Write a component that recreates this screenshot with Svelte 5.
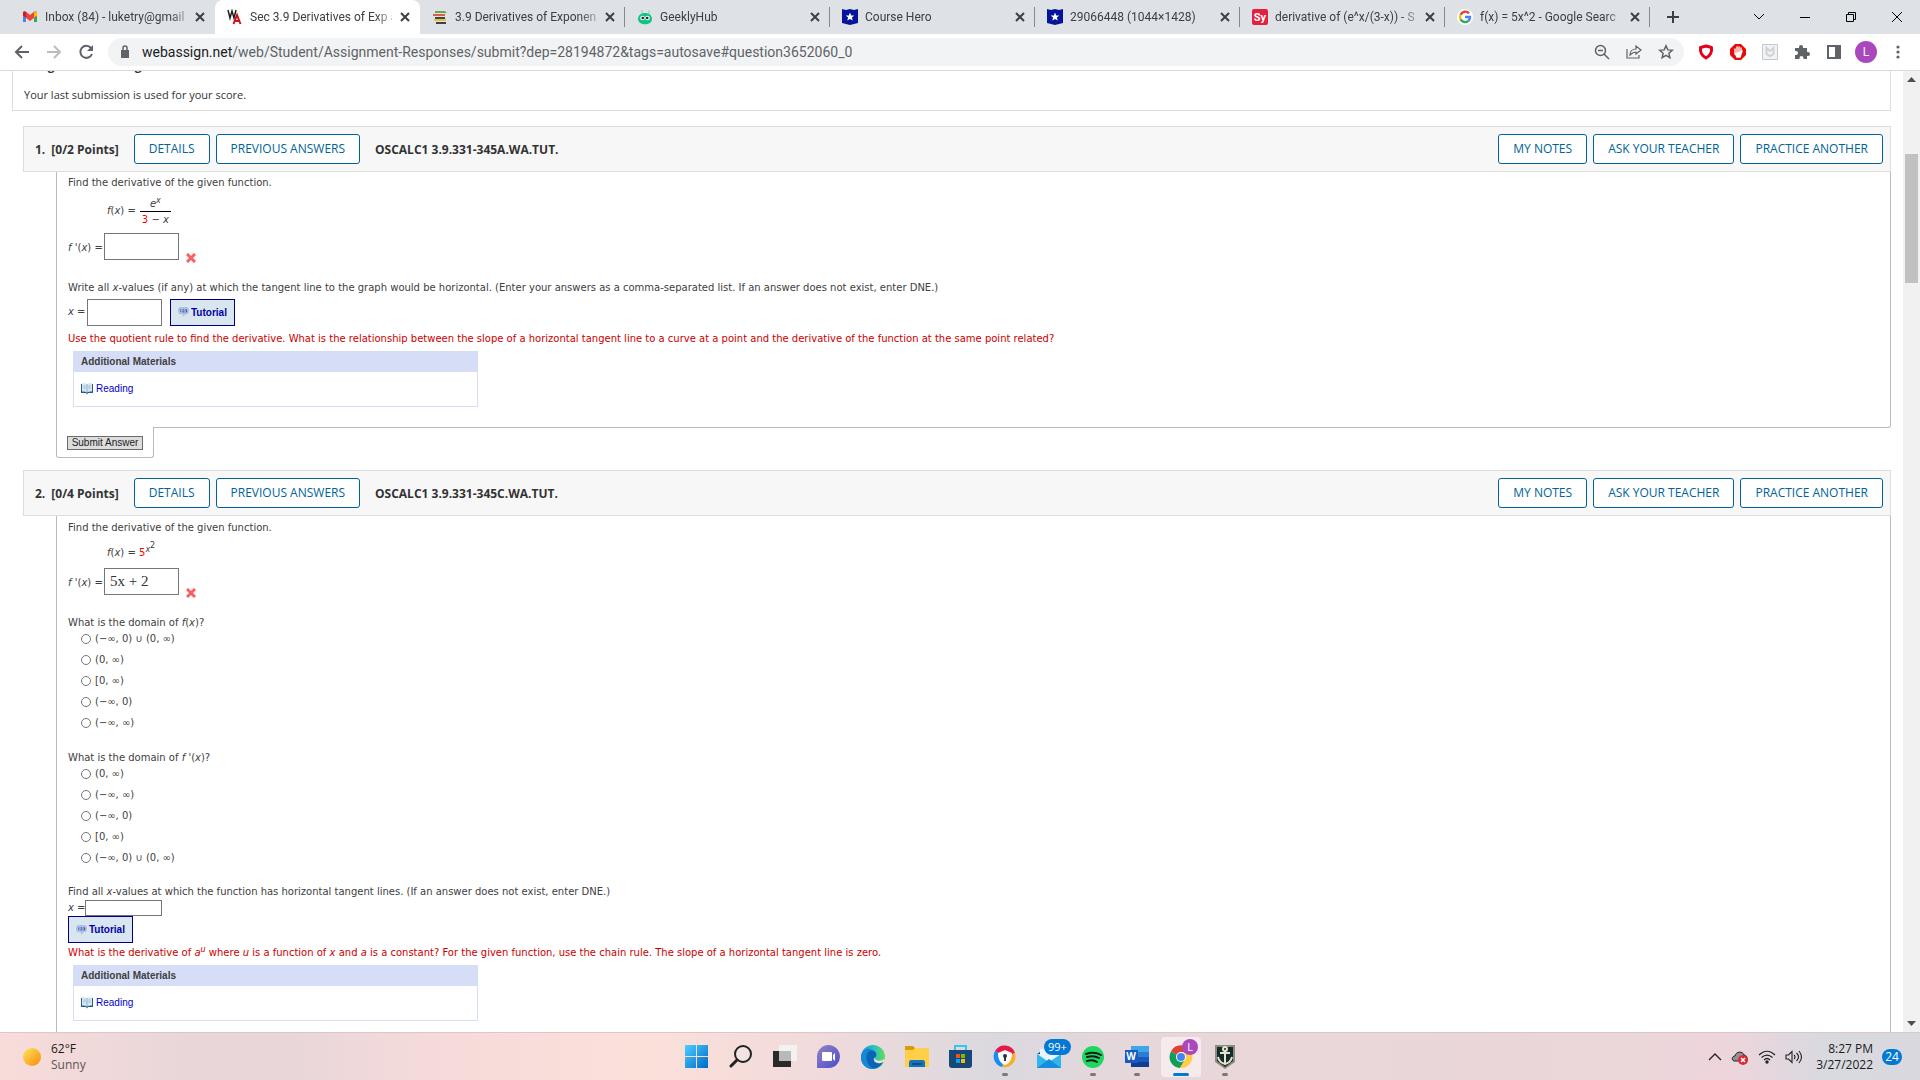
<script>
    let tabs = [
        { icon: "gmail", title: "Inbox (84) - luketry@gmail" },
        { icon: "webassign", title: "Sec 3.9 Derivatives of Exp a", active: true },
        { icon: "books", title: "3.9 Derivatives of Exponen", line: true },
        { icon: "robot", title: "GeeklyHub", line: true },
        { icon: "hero", title: "Course Hero", line: true },
        { icon: "hero", title: "29066448 (1044×1428)", line: true },
        { icon: "symbolab", title: "derivative of (e^x/(3-x)) - S", line: true },
        { icon: "google", title: "f(x) = 5x^2 - Google Searc", line: true },
    ];

    const domainF = ["(−∞, 0) ∪ (0, ∞)", "(0, ∞)", "[0, ∞)", "(−∞, 0)", "(−∞, ∞)"];
    const domainFPrime = ["(0, ∞)", "(−∞, ∞)", "(−∞, 0)", "[0, ∞)", "(−∞, 0) ∪ (0, ∞)"];

    const apps = [
        { name: "Start" },
        { name: "Search" },
        { name: "Task view" },
        { name: "Chat" },
        { name: "Edge" },
        { name: "File Explorer" },
        { name: "Store" },
        { name: "Secure Browser", open: true },
        { name: "Mail", badge: "99+" },
        { name: "Spotify", open: true },
        { name: "Word", open: true },
        { name: "Chrome", open: true, focused: true, badge: "L" },
        { name: "Warships", open: true },
    ];

    let first = "";
    let firstX = "";
    let second = "5x + 2";
    let secondX = "";
    let pickF;
    let pickFPrime;
</script>

{#snippet favicon(name)}
    <svg class="favicon" viewBox="0 0 16 16" aria-hidden="true">
        {#if name === "gmail"}
            <path d="M1 3.5V13h3V6.500z" fill="#4285f4" />
            <path d="M12 6.500V13h3V3.500z" fill="#34a853" />
            <path d="M1 4v2.500L8 12l7-5.500V4c0-1.800-1.800-2.200-3-1.200L8 6 4 2.800C2.800 1.800 1 2.200 1 4z" fill="#ea4335" />
            <path d="M1 4v2.500l3 2.300V2.900C2.800 2 1 2.300 1 4z" fill="#c5221f" />
            <path d="M12 2.900v5.900l3-2.300V4c0-1.700-1.800-2-3-1.100z" fill="#fbbc04" />
        {:else if name === "webassign"}
            <path d="M1 1l2 8 2-7 2 7 2-8" fill="none" stroke="#222" stroke-width="1.500" />
            <path d="M6.500 15L10 6l3.500 9M8 12h5" fill="none" stroke="#d0111b" stroke-width="2" />
        {:else if name === "books"}
            <path d="M3 2h10l2 2H3z" fill="#69a84f" />
            <path d="M1 5h12v2H1z" fill="#d4624d" />
            <path d="M3 8h10v2H3z" fill="#444" />
            <path d="M2 10h12v2H2z" fill="#e6c637" />
            <path d="M4 13h10v2H4z" fill="#3c4248" />
        {:else if name === "robot"}
            <path d="M5 1v4M12 1v4" stroke="#7bd6b4" />
            <path d="M1 10c0-8 14-8 14 0 0 7-14 7-14 0z" fill="#12c483" />
            <circle cx="5.500" cy="9" r="2.300" fill="#fff" />
            <circle cx="10.500" cy="9" r="2.300" fill="#fff" />
            <circle cx="5.800" cy="9" r="1.300" fill="#222" />
            <circle cx="10.200" cy="9" r="1.300" fill="#222" />
        {:else if name === "hero"}
            <path d="M0 0l4 1 4-1 4 1 4-1v14l-8 2-8-2z" fill="#05149a" />
            <path d="M8 3.500l1.200 2.900 3.100.2-2.400 2 .8 3L8 10l-2.700 1.600.8-3-2.400-2 3.100-.2z" fill="#fff" />
        {:else if name === "symbolab"}
            <rect width="16" height="16" rx="2" fill="#e4203f" />
            <text x="8" y="12" text-anchor="middle" font-size="11" font-weight="700" fill="#fff">Sy</text>
        {:else}
            <circle cx="8" cy="8" r="8" fill="#fff" />
            <g fill="none" stroke-width="2.400">
                <path d="M12 4.400A5 5 0 0 0 3.600 5.800" stroke="#ea4335" />
                <path d="M3.600 5.800a5 5 0 0 0 0 4.600" stroke="#fbbc04" />
                <path d="M3.600 10.400a5 5 0 0 0 7.800 1.400" stroke="#34a853" />
                <path d="M11.400 11.800A5 5 0 0 0 13 8H8" stroke="#4285f4" />
            </g>
        {/if}
    </svg>
{/snippet}

{#snippet wrong()}
    <svg class="wrong" viewBox="0 0 10 10" role="img" aria-label="Incorrect">
        <path d="M1 1l8 8M9 1L1 9" stroke="#f9605f" stroke-width="3" />
    </svg>
{/snippet}

{#snippet tutorial()}
    <button class="tutorial">
        <svg width="11" height="10" viewBox="0 0 12 11" aria-hidden="true">
            <path d="M3 0h6c2 0 3 1.500 3 4S11 8 9 8H8l-2 3-1-3H3C1 8 0 6.500 0 4s1-4 3-4z" fill="#a9c1e6" />
            <path d="M3 2.500v3M5 3h1.500v1L5 5.500h2M8 3h1.500v2.500H8M8.500 4.200h1" fill="none" stroke="#33419c" stroke-width=".8" />
        </svg>
        Tutorial
    </button>
{/snippet}

{#snippet materials()}
    <section class="materials">
        <h3>Additional Materials</h3>
        <a href="#reading">
            <svg width="12" height="12" viewBox="0 0 12 12" aria-hidden="true">
                <path d="M0 1h12v9H7l-1 1.500L5 10H0z" fill="#255c8c" />
                <path d="M1 0c2 0 4 0 5 1 1-1 3-1 5-1v8.500c-2 0-4 0-5 1-1-1-3-1-5-1z" fill="#d9e8f1" />
                <path d="M6 1v8.500M2.500 3h2M7.500 3h2M2.500 5h2M7.500 5h2" stroke="#7ca4bf" stroke-width=".8" />
            </svg>
            Reading
        </a>
    </section>
{/snippet}

{#snippet heading(number, points, code)}
    <header class="question-head">
        <strong class="number">{number}.</strong>
        <strong class="points">[{points} Points]</strong>
        <button>DETAILS</button>
        <button>PREVIOUS ANSWERS</button>
        <h2>{code}</h2>
        <button>MY NOTES</button>
        <button>ASK YOUR TEACHER</button>
        <button>PRACTICE ANOTHER</button>
    </header>
{/snippet}

{#snippet appIcon(name)}
    <svg width="24" height="24" viewBox="0 0 24 24" aria-hidden="true">
        {#if name === "Start"}
            <path d="M0 0h11v11H0zM12 0h11v11H12zM0 12h11v11H0zM12 12h11v11H12z" fill="url(#blue)" />
        {:else if name === "Search"}
            <circle cx="14" cy="9" r="8" fill="#f3e4e4" stroke="#222" stroke-width="2" />
            <path d="M8 15l-6 6" stroke="#222" stroke-width="3" stroke-linecap="round" />
        {:else if name === "Task view"}
            <path d="M0 6h18v16H0z" fill="#292a29" />
            <path d="M6 0h18v16H6z" fill="#f2f2f2" />
            <path d="M6 6h12v10H6z" fill="#b9b9b9" />
        {:else if name === "Chat"}
            <path d="M0 23V11a11.500 11.500 0 1 1 12 12z" fill="url(#purple)" />
            <rect x="5" y="7" width="10" height="9" rx="1" fill="#fff" />
            <path d="M16 10l2-2v8l-2-2z" fill="#fff" />
        {:else if name === "Edge"}
            <circle cx="12" cy="12" r="12" fill="url(#edge)" />
            <path d="M0 12C1 5 7 3 11 5c6 2 5 7 2 8-1 4 4 7 9 4-3 6-9 8-14 6-5-2-8-6-8-11z" fill="#0b63b8" />
            <path d="M0 12C1 5 8 3 12 6 7 5 4 10 6 16c1 4 4 7 8 8C6 25 0 20 0 12z" fill="#1589d7" />
            <path d="M13 13c-1 4 4 7 9 4l1 0c1-1 1-3 0-3-2 2-7 3-10-1z" fill="#eedcde" />
        {:else if name === "File Explorer"}
            <path d="M0 1h8l2 2v4H0z" fill="#dc9a0a" />
            <path d="M0 5h8l2-2h14v19H0z" fill="#ffd047" />
            <path d="M4 22v-5c0-1 1-2 2-2h12c1 0 2 1 2 2v5z" fill="#1473bf" />
            <path d="M7 18h10v2H7z" fill="#084e91" />
        {:else if name === "Store"}
            <path d="M6 6V1h11v5" fill="none" stroke="#35c5ef" stroke-width="2" />
            <path d="M0 5h23v15c0 2-1 3-3 3H3c-2 0-3-1-3-3z" fill="#174777" />
            <path d="M7 9h4v4H7z" fill="#f15022" />
            <path d="M12 9h4v4h-4z" fill="#80ba02" />
            <path d="M7 14h4v4H7z" fill="#02a4ee" />
            <path d="M12 14h4v4h-4z" fill="#ffb902" />
        {:else if name === "Secure Browser"}
            <path d="M2 6A11 11 0 0 1 22 8L12 12z" fill="#e71849" />
            <path d="M22 8A11 11 0 0 1 9 22l3-10z" fill="#fbab28" />
            <path d="M9 22A11 11 0 0 1 2 6l10 6z" fill="#168df2" />
            <path d="M12 5l7 3c0 6-2 10-7 12-5-2-7-6-7-12z" fill="#fff" />
            <circle cx="12" cy="11" r="2" fill="#333" />
            <path d="M11 11h2v5h-2z" fill="#333" />
        {:else if name === "Mail"}
            <path d="M0 9l12-8 12 8z" fill="#0a4c94" />
            <path d="M3 4h19v12H3z" fill="#e9f5fc" />
            <path d="M0 9l12 8 12-8v14H0z" fill="#34b4ee" />
            <path d="M0 23l12-9 12 9z" fill="#158edb" />
        {:else if name === "Spotify"}
            <circle cx="12" cy="12" r="11" fill="#1ed760" />
            <path d="M5 9q8-3 15 1M6 12q7-2 12 1M6 16q6-2 10 1" fill="none" stroke="#151b18" stroke-width="2" stroke-linecap="round" />
        {:else if name === "Word"}
            <path d="M6 1h18v6H6z" fill="#41a5ee" />
            <path d="M6 7h18v5H6z" fill="#2b7cd3" />
            <path d="M6 12h18v5H6z" fill="#185abd" />
            <path d="M6 17h18v5H6z" fill="#103f91" />
            <path d="M0 5h13v13H0z" fill="#185abd" />
            <text x="6" y="15" text-anchor="middle" font-size="10" font-weight="700" fill="#fff">W</text>
        {:else if name === "Chrome"}
            <path d="M12 12L2 6.500A11 11 0 0 1 22 7H12z" fill="#dc4437" />
            <path d="M12 12L2 6.500A11 11 0 0 0 11 23l5-8z" fill="#139d59" />
            <path d="M12 7h10a11 11 0 0 1-11 16l5-9z" fill="#ffce44" />
            <circle cx="12" cy="12" r="5" fill="#fff" />
            <circle cx="12" cy="12" r="4" fill="#4385f4" />
        {:else}
            <path d="M2 0h20v17l-10 7-10-7z" fill="#8e8d7b" />
            <path d="M4 2h16v14l-8 6-8-6z" fill="#122d2b" />
            <circle cx="12" cy="4" r="2" fill="none" stroke="#e8e3cf" stroke-width="2" />
            <path d="M12 6v14M7 8h10M5 12c1 5 4 6 7 7 3-1 6-2 7-7" fill="none" stroke="#e8e3cf" stroke-width="2" />
        {/if}
    </svg>
{/snippet}

<div class="desktop">
    <nav class="tabs" aria-label="Tabs">
        {#each tabs as tab}
            <div class="tab" class:active={tab.active} class:line={tab.line}>
                {@render favicon(tab.icon)}
                <span>{tab.title}</span>
                <button aria-label="Close tab">
                    <svg width="12" height="12" viewBox="0 0 12 12"><path d="M2 2l8 8M10 2l-8 8" stroke="#3c4043" stroke-width="2" /></svg>
                </button>
            </div>
        {/each}
        <button class="new-tab" aria-label="New tab">
            <svg width="14" height="14" viewBox="0 0 14 14"><path d="M7 1v12M1 7h12" stroke="#3c4043" stroke-width="2" /></svg>
        </button>
        <div class="window-buttons">
            <button aria-label="Search tabs">
                <svg width="12" height="12" viewBox="0 0 12 12"><path d="M1 3l5 5 5-5" /></svg>
            </button>
            <button aria-label="Minimize">
                <svg width="12" height="12" viewBox="0 0 12 12"><path d="M1 6.500h10" /></svg>
            </button>
            <button aria-label="Restore">
                <svg width="12" height="12" viewBox="0 0 12 12"><path d="M1.500 3.500h7v7h-7zM3.500 3.500v-2h7v7h-2" /></svg>
            </button>
            <button aria-label="Close">
                <svg width="12" height="12" viewBox="0 0 12 12"><path d="M1 1l10 10M11 1L1 11" /></svg>
            </button>
        </div>
    </nav>

    <div class="toolbar">
        <button aria-label="Back">
            <svg width="16" height="16" viewBox="0 0 16 16"><path d="M15 8H2M8 2L2 8l6 6" fill="none" stroke="#5f6368" stroke-width="2" /></svg>
        </button>
        <button aria-label="Forward">
            <svg width="16" height="16" viewBox="0 0 16 16"><path d="M1 8h13M8 2l6 6-6 6" fill="none" stroke="#bbbdbf" stroke-width="2" /></svg>
        </button>
        <button aria-label="Reload">
            <svg width="16" height="16" viewBox="0 0 16 16">
                <path d="M13 4a6 6 0 1 0 1 6" fill="none" stroke="#5f6368" stroke-width="2" />
                <path d="M15 1v6H9z" fill="#5f6368" />
            </svg>
        </button>
        <div class="address">
            <svg width="10" height="14" viewBox="0 0 10 14" aria-hidden="true">
                <path d="M1 5h8v8H1z" fill="#5f6368" />
                <path d="M3 6V3a2 2 0 0 1 4 0v3" fill="none" stroke="#5f6368" stroke-width="1.500" />
            </svg>
            <a href="#question3652060_0"><b>webassign.net</b>/web/Student/Assignment-Responses/submit?dep=28194872&amp;tags=autosave#question3652060_0</a>
            <button aria-label="Zoom">
                <svg width="16" height="16" viewBox="0 0 16 16"><g fill="none" stroke="#5f6368" stroke-width="1.500"><circle cx="6.500" cy="6.500" r="5" /><path d="M10 10l5 5M4 6.500h5" /></g></svg>
            </button>
            <button aria-label="Share">
                <svg width="16" height="16" viewBox="0 0 16 16"><path d="M1 5v9h12v-3M4 11c0-4 3-6 6-6V2l5 4-5 4V8c-2 0-4 1-6 3z" fill="none" stroke="#5f6368" stroke-width="1.200" /></svg>
            </button>
            <button aria-label="Bookmark">
                <svg width="16" height="16" viewBox="0 0 16 16"><path d="M8 1.800l1.800 4.100 4.500.4-3.400 3 1 4.400L8 11.400l-3.900 2.300 1-4.400-3.400-3 4.500-.4z" fill="none" stroke="#5f6368" stroke-width="1.500" /></svg>
            </button>
        </div>
        <button aria-label="Shield">
            <svg width="16" height="16" viewBox="0 0 16 16"><path d="M8 2l5.500 1.500C14 8 12 12 8 14 4 12 2 8 2.500 3.500z" fill="#fff" stroke="#e5001b" stroke-width="3" stroke-linejoin="round" /></svg>
        </button>
        <button aria-label="Ad blocker">
            <svg width="16" height="16" viewBox="0 0 16 16">
                <path d="M5 0h6l5 5v6l-5 5H5l-5-5V5z" fill="#e40b0b" />
                <path d="M5 5v5M7 3v6M9 3v6M11 4v6M5 9l2 4h3l2-6" fill="#fff" stroke="#fff" stroke-width="1.400" stroke-linecap="round" />
            </svg>
        </button>
        <button aria-label="Web advisor">
            <svg width="16" height="16" viewBox="0 0 16 16"><path d="M.5.500h15v15H.5z" fill="#f1f3f4" stroke="#c4c9cd" /><path d="M4.500 4v6L8 12l3.500-2V4L8 7z" fill="none" stroke="#cfd3d5" stroke-width="2" /></svg>
        </button>
        <button aria-label="Extensions">
            <svg width="16" height="16" viewBox="0 0 16 16"><path d="M1 4h4V3a2 2 0 0 1 4 0v1h4v4h1a2 2 0 0 1 0 4h-1v3H9.500v-1a2 2 0 0 0-4 0v1H1v-4h1a2 2 0 0 0 0-4H1z" fill="#5f6368" /></svg>
        </button>
        <button aria-label="Side panel">
            <svg width="16" height="16" viewBox="0 0 16 16"><path d="M1 1h14v14H1zm2 2v10h6V3z" fill="#5f6368" fill-rule="evenodd" /></svg>
        </button>
        <button class="avatar" aria-label="Profile">L</button>
        <button aria-label="Menu">
            <svg width="16" height="16" viewBox="0 0 16 16" fill="#5f6368"><circle cx="8" cy="3" r="1.600" /><circle cx="8" cy="8" r="1.600" /><circle cx="8" cy="13" r="1.600" /></svg>
        </button>
    </div>

    <div class="viewport">
        <main>
            <section class="notice">
                <strong>Assignment Scoring</strong>
                <p>Your last submission is used for your score.</p>
            </section>

            <article>
                {@render heading(1, "0/2", "OSCALC1 3.9.331-345A.WA.TUT.")}
                <div class="question">
                    <p>Find the derivative of the given function.</p>
                    <div class="formula">
                        <span><i>f</i>(<i>x</i>) =</span>
                        <span class="fraction">
                            <span><i>e<sup>x</sup></i></span>
                            <span><span class="value">3</span> − <i>x</i></span>
                        </span>
                    </div>
                    <div class="answer">
                        <label for="a1"><i>f</i> '(<i>x</i>) =</label>
                        <input id="a1" type="text" bind:value={first} />
                        {@render wrong()}
                    </div>
                    <p class="next">Write all <i>x</i>-values (if any) at which the tangent line to the graph would be horizontal. (Enter your answers as a comma-separated list. If an answer does not exist, enter DNE.)</p>
                    <div class="short">
                        <label for="a2"><i>x</i> =</label>
                        <input id="a2" type="text" bind:value={firstX} />
                        {@render tutorial()}
                    </div>
                    <p class="hint">Use the quotient rule to find the derivative. What is the relationship between the slope of a horizontal tangent line to a curve at a point and the derivative of the function at the same point related?</p>
                    {@render materials()}
                </div>
                <div class="submit"><button>Submit Answer</button></div>
            </article>

            <article>
                {@render heading(2, "0/4", "OSCALC1 3.9.331-345C.WA.TUT.")}
                <div class="question last">
                    <p>Find the derivative of the given function.</p>
                    <div class="formula power">
                        <span><i>f</i>(<i>x</i>) = <span class="value">5</span><sup><i>x</i><sup>2</sup></sup></span>
                    </div>
                    <div class="answer">
                        <label for="b1"><i>f</i> '(<i>x</i>) =</label>
                        <input id="b1" type="text" bind:value={second} />
                        {@render wrong()}
                    </div>
                    <fieldset>
                        <legend>What is the domain of <i>f</i>(<i>x</i>)?</legend>
                        {#each domainF as option}
                            <label><input type="radio" name="domain-f" value={option} bind:group={pickF} />{option}</label>
                        {/each}
                    </fieldset>
                    <fieldset>
                        <legend>What is the domain of <i>f</i> '(<i>x</i>)?</legend>
                        {#each domainFPrime as option}
                            <label><input type="radio" name="domain-fp" value={option} bind:group={pickFPrime} />{option}</label>
                        {/each}
                    </fieldset>
                    <p class="next">Find all <i>x</i>-values at which the function has horizontal tangent lines. (If an answer does not exist, enter DNE.)</p>
                    <div class="plain">
                        <label for="b2"><i>x</i> =</label>
                        <input id="b2" type="text" bind:value={secondX} />
                    </div>
                    {@render tutorial()}
                    <p class="hint close">What is the derivative of <i>a<sup>u</sup></i> where <i>u</i> is a function of <i>x</i> and <i>a</i> is a constant? For the given function, use the chain rule. The slope of a horizontal tangent line is zero.</p>
                    {@render materials()}
                </div>
            </article>
        </main>
        <div class="scrollbar" aria-hidden="true">
            <svg width="17" height="17" viewBox="0 0 17 17"><path d="M4 11l4.500-5 4.500 5z" fill="#505050" /></svg>
            <div class="track"><div class="thumb"></div></div>
            <svg width="17" height="17" viewBox="0 0 17 17"><path d="M4 6l4.500 5L13 6z" fill="#505050" /></svg>
        </div>
    </div>

    <footer class="taskbar">
        <div class="weather">
            <svg width="20" height="20" viewBox="0 0 20 20" aria-hidden="true"><circle cx="10" cy="10" r="9" fill="url(#sun)" /></svg>
            <p>62°F<br /><span>Sunny</span></p>
        </div>
        <div class="apps">
            {#each apps as app}
                <button class:open={app.open} class:focused={app.focused} aria-label={app.name}>
                    {@render appIcon(app.name)}
                    {#if app.badge}
                        <span class="badge" class:profile={app.focused}>{app.badge}</span>
                    {/if}
                </button>
            {/each}
        </div>
        <div class="tray">
            <svg width="14" height="14" viewBox="0 0 14 14"><path d="M1 10l6-6 6 6" fill="none" stroke="#222" stroke-width="1.300" /></svg>
            <svg width="18" height="16" viewBox="0 0 18 16">
                <path d="M3 12c-3-1-2-5 1-5 1-5 8-5 9-1 3 0 4 4 2 6z" fill="#929292" stroke="#222" />
                <circle cx="12" cy="11" r="5" fill="#d92a35" />
                <path d="M10 9l4 4M14 9l-4 4" stroke="#fff" stroke-width="1.500" />
            </svg>
            <svg width="18" height="14" viewBox="0 0 18 14">
                <path d="M1 5c5-5 11-5 16 0M3.500 7.500c4-3.500 7-3.500 11 0M6 10c2-2 4-2 6 0" fill="none" stroke="#222" stroke-width="1.200" />
                <circle cx="9" cy="12" r="1.700" fill="#222" />
            </svg>
            <svg width="18" height="14" viewBox="0 0 18 14"><path d="M1 5h2.500L7 1.500v11L3.500 9H1zM9 5q2 2 0 4M11.500 3q4 4 0 8M14 1q5 6 0 12" fill="none" stroke="#222" stroke-width="1.100" /></svg>
            <time>8:27 PM<br />3/27/2022</time>
            <span class="count">24</span>
        </div>
    </footer>
</div>

<svg class="defs" width="0" height="0" aria-hidden="true">
    <defs>
        <linearGradient id="blue" x1="0" y1="0" x2="1" y2="1"><stop stop-color="#4bcfff" /><stop offset="1" stop-color="#0067c9" /></linearGradient>
        <linearGradient id="purple" x1="0" y1="0" x2="1" y2="1"><stop stop-color="#9584c4" /><stop offset="1" stop-color="#4c4bc9" /></linearGradient>
        <linearGradient id="edge"><stop stop-color="#1597dc" /><stop offset=".5" stop-color="#24bccb" /><stop offset="1" stop-color="#63df54" /></linearGradient>
        <linearGradient id="sun" x1="0" y1="0" x2="1" y2="1"><stop stop-color="#ffe45c" /><stop offset="1" stop-color="#f98a08" /></linearGradient>
    </defs>
</svg>

<style>
    :global(body) {
        overflow: hidden;
    }

    .desktop {
        height: 100vh;
        display: flex;
        flex-direction: column;
        font-family: "Open Sans", sans-serif;
        font-size: 12px;
        color: #3c4043;
        background: white;
    }

    * {
        box-sizing: border-box;
    }

    button {
        font: inherit;
        color: inherit;
        background: none;
        border: none;
        padding: 0;
    }

    svg {
        display: block;
        flex-shrink: 0;
    }

    p {
        margin: 0;
    }

    .defs {
        position: absolute;
    }

    /* browser */
    .tabs {
        display: flex;
        align-items: center;
        height: 34px;
        padding-left: 10px;
        background: #dee1e6;
        font-family: Roboto, sans-serif;
    }

    .tab {
        display: flex;
        align-items: center;
        gap: 7px;
        flex: 0 1 205px;
        min-width: 0;
        height: 34px;
        padding: 0 9px 0 12px;
        position: relative;
    }
    .tab.active {
        background: white;
        border-radius: 8px 8px 0 0;
    }
    .tab.line::after {
        content: "";
        position: absolute;
        right: 0;
        top: 7px;
        height: 20px;
        width: 1px;
        background: #85888d;
    }
    .tab span {
        flex: 1;
        min-width: 0;
        overflow: hidden;
        white-space: nowrap;
        mask-image: linear-gradient(to right, black 88%, transparent 105%);
    }

    .favicon {
        width: 16px;
        height: 16px;
    }

    .new-tab {
        margin-left: 16px;
    }

    .window-buttons {
        display: flex;
        margin-left: auto;
        height: 28px;
    }
    .window-buttons button {
        width: 46px;
        display: grid;
        place-items: center;
    }
    .window-buttons path {
        fill: none;
        stroke: black;
    }

    .toolbar {
        display: flex;
        align-items: center;
        height: 37px;
        padding: 0 6px;
        border-bottom: 1px solid #d9dadc;
        font-family: Roboto, sans-serif;
    }
    .toolbar button {
        width: 32px;
        display: grid;
        place-items: center;
    }

    .address {
        flex: 1;
        display: flex;
        align-items: center;
        height: 28px;
        margin: 0 6px;
        padding: 0 2px 0 12px;
        border-radius: 14px;
        background: #f1f3f4;
        font-size: 14px;
    }
    .address a {
        flex: 1;
        margin-left: 12px;
        color: #5f6368;
        text-decoration: none;
    }
    .address b {
        font-weight: 400;
        color: #202124;
    }

    .toolbar .avatar {
        width: 22px;
        height: 22px;
        margin: 0 5px;
        border-radius: 50%;
        background: #ab47bc;
        color: white;
    }

    /* page */
    .viewport {
        flex: 1;
        min-height: 0;
        display: flex;
    }

    main {
        flex: 1;
        min-width: 0;
        overflow: hidden;
        padding: 0 12px;
        color: #404040;
    }

    .notice {
        display: flex;
        flex-direction: column;
        justify-content: flex-end;
        height: 40px;
        overflow: hidden;
        padding: 0 11px 7px;
        border: 1px solid #ddd;
        border-top: none;
        line-height: 17px;
        color: #333;
    }
    .notice p {
        margin-top: 12px;
        font-size: 11px;
    }

    article {
        margin: 15px 0 0 11px;
    }
    article + article {
        margin-top: 12px;
    }

    .question-head {
        display: flex;
        align-items: center;
        height: 46px;
        padding: 0 7px 0 11px;
        gap: 6px;
        background: #f7f7f7;
        border: 1px solid #ddd;
        color: #333;
    }
    .question-head .points {
        margin-right: 9px;
    }
    .question-head h2 {
        flex: 1;
        margin: 0 0 0 9px;
        font-size: 12px;
    }
    .question-head button {
        height: 30px;
        padding: 0 14px 1px;
        border: 1px solid #006298;
        border-radius: 3px;
        background: white;
        color: #006298;
    }

    .question {
        margin-left: 33px;
        padding: 4px 11px 20px;
        border: 1px solid #bbb;
        border-top: none;
        border-bottom-right-radius: 3px;
        font: 10px/14px "DejaVu Sans", sans-serif;
    }
    .question.last {
        min-height: 600px;
        padding-top: 5px;
    }

    .formula {
        display: flex;
        align-items: center;
        gap: 4px;
        height: 32px;
        margin: 5px 0 6px 39px;
    }
    .formula.power {
        height: 26px;
        margin-bottom: 2px;
    }

    sup {
        font-size: 8px;
        line-height: 0;
    }

    .fraction {
        display: flex;
        flex-direction: column;
        align-items: center;
    }
    .fraction > span {
        padding: 0 2px;
        line-height: 15px;
    }
    .fraction > span:last-child {
        border-top: 1px solid black;
    }

    .value {
        color: red;
    }

    .answer {
        display: flex;
        align-items: center;
        height: 30px;
    }
    .answer label {
        width: 36px;
    }
    .answer .wrong {
        width: 10px;
        height: 10px;
        margin-left: 7px;
        align-self: flex-end;
    }
    .answer input,
    .short input {
        width: 75px;
        height: 27px;
        padding: 0 5px;
        border: 1px solid #767676;
        font: 15px "Liberation Serif", serif;
        color: #333;
    }
    .answer input {
        align-self: flex-start;
    }

    .next {
        margin-top: 18px;
    }

    .short {
        display: flex;
        align-items: center;
        height: 28px;
        margin-top: 3px;
    }
    .short label {
        width: 19px;
    }
    .short input {
        margin-right: 8px;
    }

    .plain {
        display: flex;
        align-items: center;
        margin-top: 1px;
    }
    .plain label {
        width: 17px;
        white-space: nowrap;
    }
    .plain input {
        width: 77px;
        height: 16px;
        border: 1px solid #767676;
    }

    .tutorial {
        display: flex;
        align-items: center;
        gap: 2px;
        height: 27px;
        padding: 0 7px;
        border: 1px solid #000080;
        background: #dae6ef;
        color: #0000a8;
        font: bold 10px "Liberation Sans", sans-serif;
    }

    .hint {
        margin-top: 6px;
        color: #c00;
    }
    .hint.close {
        margin-top: 3px;
    }

    .materials {
        width: 405px;
        margin: 5px 0 0 5px;
        border: 1px solid #d6ddf7;
        font-family: "Liberation Sans", sans-serif;
    }
    .materials h3 {
        margin: 0;
        padding: 0 7px;
        background: #d6ddf7;
        font-size: 10px;
        line-height: 20px;
    }
    .materials a {
        display: flex;
        align-items: center;
        gap: 3px;
        height: 34px;
        padding: 0 7px;
        color: #00c;
        text-decoration: none;
    }

    fieldset {
        margin: 19px 0 0;
        padding: 0;
        border: none;
    }
    legend {
        margin-bottom: -1px;
        padding: 0;
        line-height: 12px;
    }
    fieldset label {
        display: flex;
        align-items: center;
        gap: 4px;
        height: 21px;
        margin-left: 13px;
    }
    fieldset input {
        appearance: none;
        width: 10px;
        height: 10px;
        margin: 0;
        border: 1px solid #767676;
        border-radius: 50%;
        background: white;
    }
    fieldset + .next {
        margin-top: 17px;
    }

    .submit {
        position: relative;
        width: 98px;
        height: 31px;
        margin: -1px 0 0 33px;
        padding: 9px 10px;
        background: white;
        border: 1px solid #bbb;
        border-top: none;
        border-radius: 0 0 3px 3px;
    }
    .submit button {
        display: block;
        width: 76px;
        height: 14px;
        border: 1px solid #6b6b6b;
        background: #ddd;
        color: #222;
        font: 10px/12px "Liberation Sans", sans-serif;
        white-space: nowrap;
    }

    .scrollbar {
        display: flex;
        flex-direction: column;
        width: 17px;
        background: #f1f1f1;
    }
    .track {
        flex: 1;
        padding: 66px 2px 0;
    }
    .thumb {
        height: 129px;
        background: #c1c1c1;
    }

    /* taskbar */
    .taskbar {
        display: grid;
        grid-template-columns: 1fr auto 1fr;
        align-items: center;
        height: 48px;
        border-top: 1px solid #d9c8ca;
        background: linear-gradient(to right, #f8dcda, #e8d6d9 10%, #e8d6d9 15%, #f5dada 22%, #fbe0da 34%, #f0dadb 43%, #dad9df 52%, #e8d7da 60%, #ebd6d9 85%, #eed5dc 90%, #d9d9e0 95%, #d8d8de);
        color: #1b1b1b;
    }

    .weather {
        display: flex;
        align-items: center;
        gap: 9px;
        padding-left: 22px;
        line-height: 16px;
    }
    .weather span {
        color: #5d5456;
    }

    .apps {
        display: flex;
        gap: 4px;
        padding-left: 2px;
    }
    .apps button {
        position: relative;
        display: grid;
        place-items: center;
        width: 40px;
        height: 40px;
        border-radius: 4px;
    }
    .apps .open::after {
        content: "";
        position: absolute;
        bottom: 1px;
        left: 17px;
        width: 6px;
        height: 3px;
        border-radius: 2px;
        background: #7d7778;
    }
    .apps .focused {
        background: #f6ebec;
    }
    .apps .focused::after {
        left: 12px;
        width: 16px;
        background: #0078d4;
    }
    .badge {
        position: absolute;
        top: 2px;
        left: 15px;
        padding: 0 4px;
        border-radius: 8px;
        background: #0078d4;
        color: white;
        font-size: 11px;
        line-height: 16px;
    }
    .badge.profile {
        left: 21px;
        width: 16px;
        padding: 0;
        background: #ab47bc;
    }

    .tray {
        display: flex;
        justify-content: flex-end;
        align-items: center;
        gap: 9px;
        padding-right: 18px;
    }
    .tray time {
        width: 61px;
        text-align: right;
        line-height: 16px;
    }
    .count {
        width: 20px;
        border-radius: 8px;
        background: #0078d4;
        color: white;
        line-height: 16px;
        text-align: center;
    }
</style>
